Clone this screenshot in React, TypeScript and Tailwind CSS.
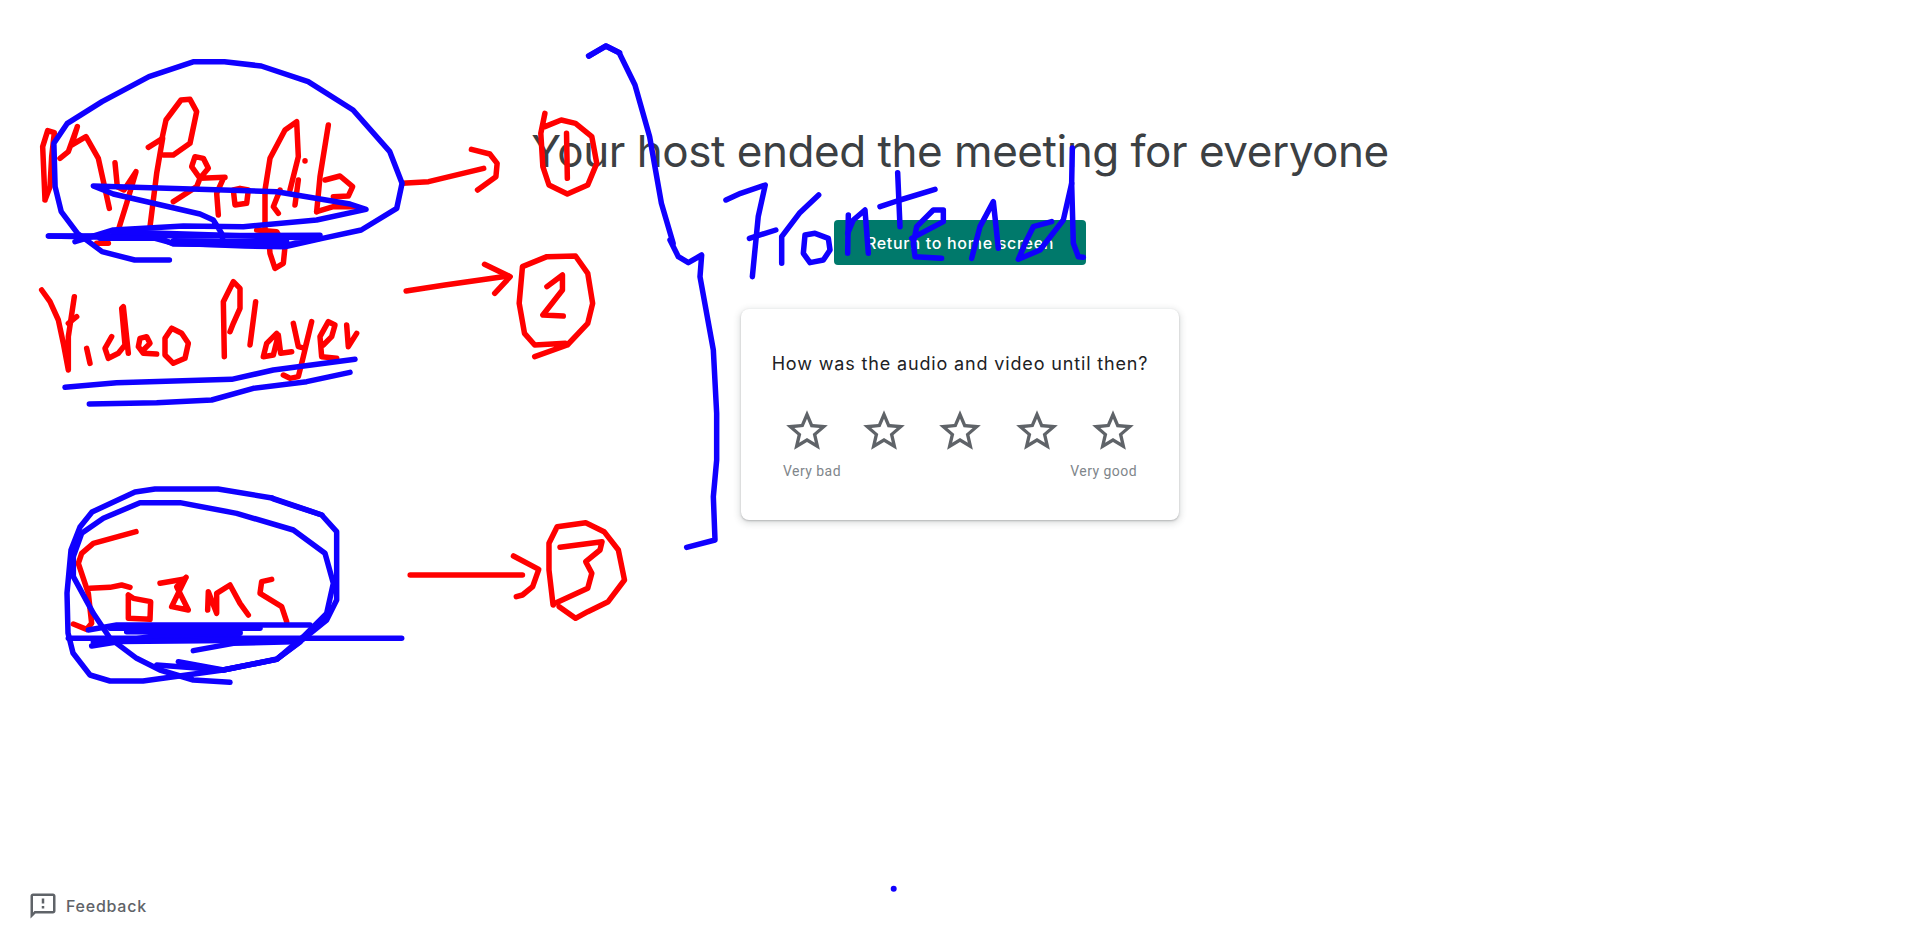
import React from "react";

type Src = { o: [number, number]; s: [number, number]; lines: string[] };

const map = (src: Src) =>
  src.lines.map((line) =>
    line
      .split(" ")
      .map((p) => {
        const [x, y] = p.split(",").map(Number);
        return `${src.o[0] + x / src.s[0]},${src.o[1] + y / src.s[1]}`;
      })
      .join(" ")
  );

const red: Src[] = [
  {
    o: [0, 90],
    s: [3, 3],
    lines: [
      "135,330 128,170 143,122 163,128 155,200 150,290 135,330",
      "180,205 205,185 232,110 215,165 258,140 295,205 328,355",
      "345,218 352,290 372,300 408,245 380,340 355,420",
      "445,172 488,145 470,250 450,410",
      "490,195 520,195 570,160 590,65 570,28 543,30 498,90 485,150",
      "520,335 590,290 600,265 575,230 585,200 610,205 625,235 600,265 675,262",
      "655,375 650,310 670,265",
      "700,300 705,345 740,340 745,300 720,295 700,300",
      "795,420 795,300 810,205 855,120 890,95 895,200 870,300",
      "835,370 820,350 840,300",
      "915,212 915,213",
      "885,345 895,270",
      "985,105 960,260 950,365",
      "975,270 1020,258 1058,290 1045,318 1000,320",
      "950,365 1000,350 1070,350",
      "770,420 830,425 855,470 850,520 825,535 810,490 805,430",
      "290,460 325,460",
    ],
  },
  {
    o: [40, 280],
    s: [3, 3],
    lines: [
      "5,30 30,65 55,120 70,190 85,270 85,170 103,50",
      "85,130 110,110",
      "140,205 150,250",
      "215,170 195,205 205,235 235,220 255,195 245,85 250,80 265,220",
      "310,210 330,190 320,170 300,175 295,200 310,220 350,222",
      "395,145 375,175 375,225 400,250 435,235 445,190 425,160 395,145",
      "553,230 550,65 580,5 600,25 600,85 580,130 570,155",
      "647,65 630,195",
      "710,160 680,190 670,230 700,225 715,165 722,220 755,215",
      "760,130 775,200 795,205 815,125 790,230 775,290 750,295 730,285",
      "850,195 875,170 885,135 865,125 840,170 845,230 890,235",
      "920,135 925,200 950,160",
    ],
  },
  {
    o: [0, 30],
    s: [2.45, 3],
    lines: [
      "985,460 1050,455 1185,415",
      "1155,358 1200,372 1218,400 1215,440 1170,480",
      "1335,250 1325,310 1330,410 1345,465 1390,492 1440,465 1462,400 1450,320 1410,280 1375,270 1335,290",
      "1388,310 1390,445",
      "995,783 1090,765 1245,738",
      "1187,703 1250,740 1212,790",
      "1310,980 1390,945 1440,880 1452,820 1440,730 1410,678 1340,680 1280,710 1272,820 1285,910 1310,945 1385,940",
      "1340,770 1378,735 1378,780 1330,855 1380,858",
    ],
  },
  {
    o: [60, 500],
    s: [3, 3],
    lines: [
      "228,95 100,130 65,160 55,190 85,280 95,370 80,388 40,372",
      "90,265 150,262 185,255 210,262",
      "205,285 205,355 270,358 272,305 220,295 205,285",
      "300,250 370,238",
      "378,232 335,320 385,330 350,260 378,232",
      "443,330 445,275 470,340 470,280 510,255 540,310 565,345",
      "635,238 605,245 600,280 665,320 680,365",
    ],
  },
  {
    o: [0, 470],
    s: [2.45, 3],
    lines: [
      "1005,315 1280,315",
      "1258,258 1320,298 1305,350 1280,375 1265,380",
      "1355,405 1345,300 1345,220 1365,170 1435,158 1480,185 1515,240 1530,330 1490,395 1440,425 1410,445 1370,410",
      "1372,232 1475,215 1470,240 1435,275 1450,310 1440,355 1360,400",
    ],
  },
];

const blue: Src[] = [
  {
    o: [0, 30],
    s: [2.45, 3],
    lines: [
      "415,690 330,690 250,665 190,610 150,545 135,470 132,340 165,280 250,215 365,140 475,95 550,95 640,108 755,155 865,240 955,365 985,460 972,535 885,600 790,625 700,650 600,648 425,640 380,625 120,618",
      "1442,78 1485,48 1518,68",
    ],
  },
  {
    o: [0, 90],
    s: [3, 3],
    lines: [
      "225,455 340,420 550,408 730,410 950,390 1098,358 1050,342 830,305 500,295 280,288 340,312 600,372 640,390 665,430 670,460",
      "145,438 960,436",
      "340,425 960,445 860,465 520,462 480,445 300,445",
      "520,452 860,455",
    ],
  },
  {
    o: [500, 30],
    s: [1.704, 3],
    lines: [
      "152,78 180,48 203,68 230,165 255,320 275,520 295,640",
      "385,510 410,490 452,465 440,560 430,740",
      "425,625 470,600",
      "480,700 480,620 510,550 543,495",
    ],
  },
  {
    o: [660, 240],
    s: [3, 3],
    lines: ["30,0 55,50 85,68 125,45 120,110 160,330 170,520 170,660 160,770 165,900 80,922"],
  },
  {
    o: [800, 170],
    s: [3, 3],
    lines: [
      "15,195 10,250 30,278 70,270 90,240 85,205 45,190 15,195",
      "145,135 143,250",
      "143,190 160,150 195,120 205,250",
      "293,8 300,170",
      "240,110 300,90 405,58",
      "335,205 430,155 430,120 400,120 350,170 340,220 345,260 425,265",
      "515,265 540,170 580,95 595,235",
      "755,155 700,170 680,210 655,268 720,240 790,150 815,40 817,-66",
      "815,40 820,220 835,260 850,262",
    ],
  },
  {
    o: [40, 280],
    s: [3, 3],
    lines: [
      "75,322 230,308 575,298 700,270 945,238",
      "148,372 350,368 515,360 640,325 800,305 930,277",
    ],
  },
  {
    o: [60, 500],
    s: [3, 3],
    lines: [
      "290,495 490,510 650,478 720,425 800,360 830,300 830,95 785,45 640,-3",
      "25,415 1025,415",
      "85,390 170,375 750,375",
      "95,438 300,405 540,400",
      "400,452 520,430 700,425",
      "150,385 600,385",
      "200,395 540,397",
      "100,425 700,420",
      "510,547 400,540 300,510 230,475 150,415 100,340 40,230 40,170 65,100 130,55 240,8 360,8 530,40 700,90 795,160 820,250 800,340 730,410 650,478 490,510 355,485",
    ],
  },
  {
    o: [0, 0],
    s: [1, 1],
    lines: [
      "272,498 218,489 155,489 135,492 92,512 80,527 71,550 67,593 68,633 73,653 90,675 110,681 143,681 223,670 277,659 300,642",
      "322,515 272,498",
    ],
  },
];

const STAR =
  "M22 9.24l-7.19-.62L12 2 9.19 8.63 2 9.24l5.46 4.73L5.82 21 12 17.27 18.18 21l-1.63-7.03L22 9.24zM12 15.4l-3.76 2.27 1-4.28-3.32-2.88 4.38-.38L12 6.1l1.71 4.04 4.38.38-3.32 2.88 1 4.28L12 15.4z";

function Star() {
  return (
    <svg viewBox="0 0 24 24" className="w-[50px] h-[50px] fill-[#5f6368]">
      <path d={STAR} />
    </svg>
  );
}

export default function App() {
  return (
    <div className="relative h-[943px] overflow-hidden bg-white flex flex-col items-center font-['Inter',sans-serif]">
      <h1 className="mt-[123px] h-[56px] text-[44px] leading-[56px] font-normal text-[#3c4043] whitespace-nowrap tracking-[-0.47px]">
        Your host ended the meeting for everyone
      </h1>
      <button className="mt-[41px] w-[252px] h-[45px] rounded-[4px] bg-[#00796b] text-white text-[16px] font-medium tracking-[0.7px]">
        Return to home screen
      </button>
      <div className="mt-[44px] w-[438px] h-[211px] rounded-[8px] bg-white shadow-[0_1px_2px_rgba(60,64,67,0.3),0_2px_6px_2px_rgba(60,64,67,0.15)] flex flex-col items-center">
        <p className="mt-[43px] text-[18px] leading-[24px] text-[#202124] whitespace-nowrap tracking-[0.85px]">
          How was the audio and video until then?
        </p>
        <div className="mt-[30px] w-[356px] flex justify-between">
          <Star />
          <Star />
          <Star />
          <Star />
          <Star />
        </div>
        <div className="mt-[5px] w-[354px] flex justify-between text-[14px] leading-[20px] text-[#80868b] tracking-[0.45px] font-['Roboto',sans-serif]">
          <span>Very bad</span>
          <span>Very good</span>
        </div>
      </div>
      <div className="mt-auto mb-[22px] self-start ml-[28px] flex items-center gap-[8px]">
        <svg viewBox="0 0 24 24" className="w-[30px] h-[30px] fill-[#5f6368]">
          <path d="M20 2H4c-1.1 0-1.99.9-1.99 2L2 22l4-4h14c1.1 0 2-.9 2-2V4c0-1.1-.9-2-2-2zm0 14H5.17L4 17.17V4h16v12zm-9-4h2v2h-2zm0-6h2v4h-2z" />
        </svg>
        <span className="text-[16px] leading-[24px] font-medium text-[#5f6368] tracking-[0.75px]">Feedback</span>
      </div>
      <svg className="absolute inset-0 w-full h-full pointer-events-none" viewBox="0 0 1920 943">
        <g className="fill-none stroke-[#ff0000] stroke-[5.5px]" strokeLinecap="round" strokeLinejoin="round">
          {red.flatMap(map).map((p, i) => (
            <polyline key={i} points={p} />
          ))}
        </g>
        <g className="fill-none stroke-[#1000ff] stroke-[5.5px]" strokeLinecap="round" strokeLinejoin="round">
          {blue.flatMap(map).map((p, i) => (
            <polyline key={i} points={p} />
          ))}
        </g>
        <circle cx="893.7" cy="888.7" r="3" className="fill-[#1000ff]" />
      </svg>
    </div>
  );
}
